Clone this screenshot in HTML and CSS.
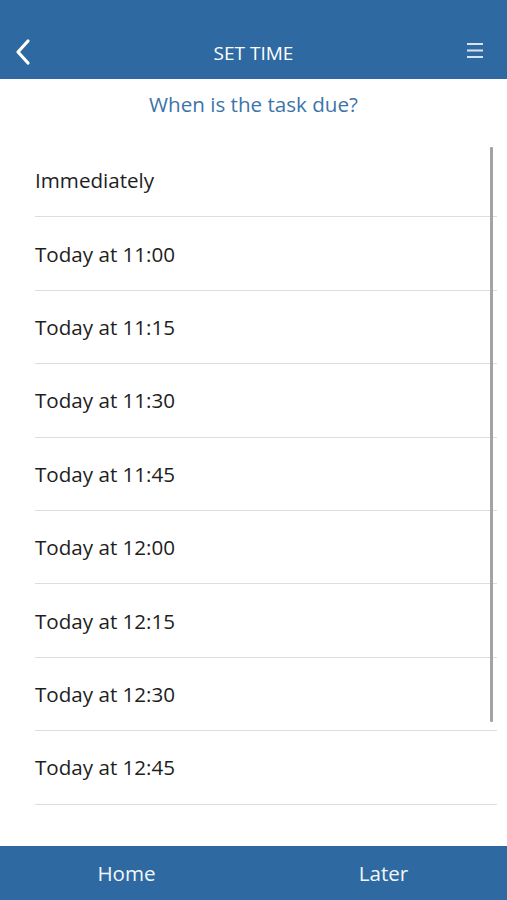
FILE: index.html
```html
<!DOCTYPE html>
<html>
<head>
<meta charset="utf-8">
<link rel="stylesheet" href="styles.css">
</head>
<body>
<div class="app">
  <header class="topbar">
    <svg class="back" width="20" height="30" viewBox="0 0 20 30"><path d="M15 4 L5 15 L15 26" fill="none" stroke="#fff" stroke-width="3.2" stroke-linecap="round" stroke-linejoin="round"/></svg>
    <div class="title">SET TIME</div>
    <svg class="menu" width="20" height="18" viewBox="0 0 20 18"><path d="M2 3h16M2 9.5h16M2 16h16" stroke="#d6e4f2" stroke-width="1.8"/></svg>
  </header>
  <div class="question">When is the task due?</div>
  <div class="listwrap">
    <ul class="list">
      <li>Immediately</li>
      <li>Today at 11:00</li>
      <li>Today at 11:15</li>
      <li>Today at 11:30</li>
      <li>Today at 11:45</li>
      <li>Today at 12:00</li>
      <li>Today at 12:15</li>
      <li>Today at 12:30</li>
      <li>Today at 12:45</li>
    </ul>
    <div class="scrollbar"></div>
  </div>
  <footer class="bottombar">
    <div class="btn btn-home">Home</div>
    <div class="btn btn-later">Later</div>
  </footer>
</div>
</body>
</html>
```
FILE: styles.css
```css
html, body {
  margin: 0;
  padding: 0;
  background: #fff;
}
body {
  font-family: "Open Sans", "Noto Sans", sans-serif;
}
.app {
  width: 507px;
  height: 900px;
  display: flex;
  flex-direction: column;
}
.topbar {
  height: 79px;
  flex: none;
  background: #2e6aa1;
  display: flex;
  align-items: flex-end;
  justify-content: space-between;
  padding: 0 22px 12px 13px;
  box-sizing: border-box;
  position: relative;
}
.back {
  display: block;
}
.title {
  position: absolute;
  left: 0;
  right: 0;
  bottom: 14px;
  text-align: center;
  color: #fff;
  font-size: 19px;
  line-height: 24px;
}
.menu {
  display: block;
  margin-bottom: 8px;
}
.question {
  height: 50px;
  flex: none;
  text-align: center;
  color: #3b74aa;
  font-size: 20.6px;
  line-height: 50px;
}
.listwrap {
  flex: 1;
  position: relative;
  padding-top: 15px;
}
.list {
  list-style: none;
  margin: 0 10px 0 35px;
  padding: 0;
}
.list li {
  height: 73.4px;
  box-sizing: border-box;
  border-bottom: 1.5px solid #dedede;
  display: flex;
  align-items: center;
  color: #1e1e1e;
  font-size: 20.6px;
}
.scrollbar {
  position: absolute;
  left: 490px;
  top: 18px;
  width: 3px;
  height: 575px;
  background: #a3a3a3;
  border-radius: 1px;
}
.bottombar {
  height: 54px;
  flex: none;
  background: #2e6aa1;
  display: flex;
}
.btn {
  flex: 1;
  text-align: center;
  color: #f2f6fa;
  font-size: 20.6px;
  line-height: 54px;
}
.btn-home {
  padding-left: 3px;
}
.btn-later {
  padding-left: 10px;
}
```
